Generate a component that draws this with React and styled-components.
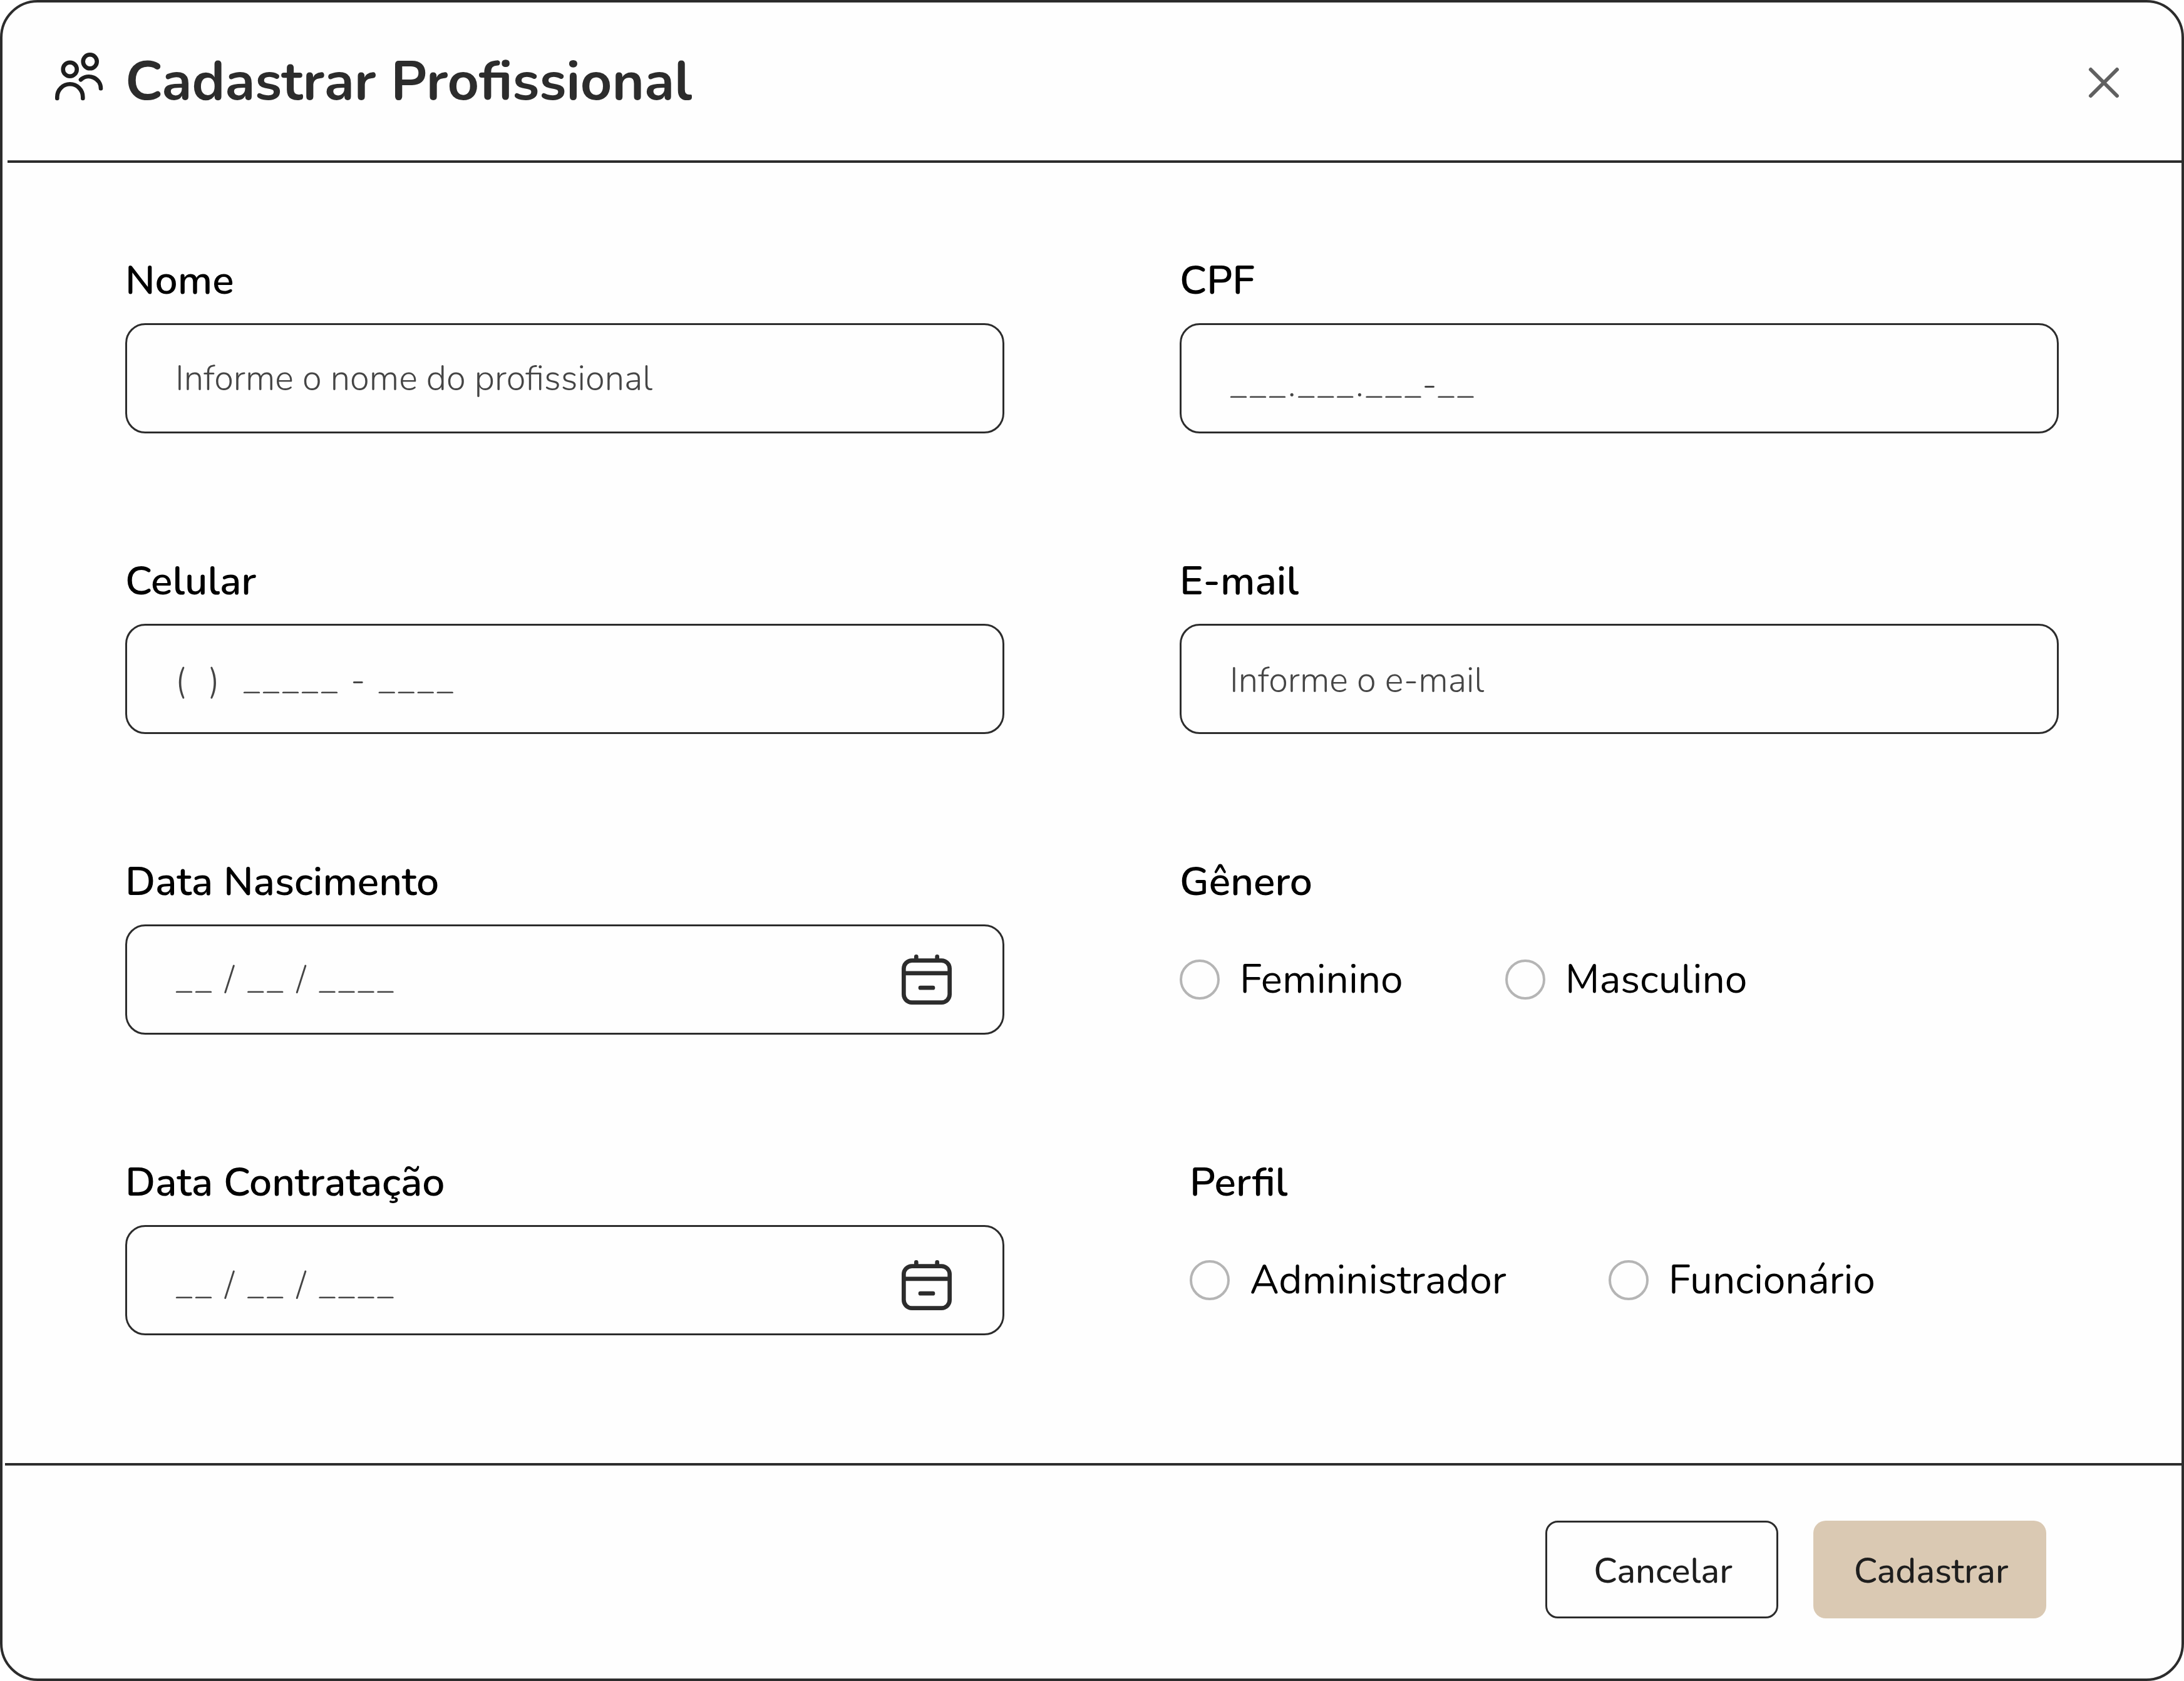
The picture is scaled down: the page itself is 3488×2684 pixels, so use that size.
import React from "react";
import styled, { createGlobalStyle } from "styled-components";

const ink = "#2c2c2c";

const GlobalStyle = createGlobalStyle`
  *, *::before, *::after { box-sizing: border-box; }
  body {
    margin: 0;
    background: #ffffff;
    font-family: Nunito, Lato, sans-serif;
  }
  input, button { font-family: inherit; }
`;

const Modal = styled.main`
  display: flex;
  flex-direction: column;
  min-height: 100vh;
  border: 4px solid ${ink};
  border-radius: 60px;
  background: #fefefe;
`;

const Header = styled.header`
  display: flex;
  align-items: center;
  gap: 20px;
  margin-left: 8px;
  padding: 66px 72px 66px 64px;
  border-bottom: 4px solid ${ink};
`;

const Title = styled.h1`
  flex: 1;
  margin: 0;
  color: ${ink};
  font-size: 88px;
  font-weight: 700;
  line-height: 120px;
`;

const HeaderIcon = styled.svg`
  width: 104px;
  height: 104px;
  fill: none;
  stroke: #1e1e1e;
  stroke-width: 6.6;
  stroke-linecap: round;
`;

const CloseButton = styled.button`
  display: flex;
  width: 104px;
  height: 104px;
  padding: 0;
  border: 0;
  background: none;
  color: #606060;
`;

const Form = styled.form`
  display: flex;
  flex: 1;
  flex-direction: column;
`;

const Fields = styled.div`
  display: grid;
  flex: 1;
  grid-template-columns: 1fr 1fr;
  align-content: start;
  gap: 192px 280px;
  padding: 144px 196px 204px;
`;

const Field = styled.div`
  display: flex;
  flex-direction: column;
  gap: 24px;
`;

const labelText = `
  color: #000000;
  font-size: 64px;
  font-weight: 600;
  line-height: 88px;
`;

const Label = styled.label`
  ${labelText}
`;

const InputBox = styled.div`
  display: flex;
  align-items: center;
  height: 176px;
  padding: ${(p) => p.$drop || 0}px 81px 0 77px;
  border: 3px solid ${ink};
  border-radius: 32px;
`;

const Input = styled.input`
  flex: 1;
  min-width: 0;
  height: 80px;
  padding: 0;
  border: 0;
  outline: 0;
  background: transparent;
  color: ${ink};
  font-size: 56px;
  font-weight: 300;
  letter-spacing: ${(p) => (p.$mask ? "3px" : "normal")};

  &::placeholder {
    color: #454545;
    opacity: 1;
  }
`;

const CalendarButton = styled.button`
  display: flex;
  width: 80px;
  height: 80px;
  padding: 0;
  border: 0;
  background: none;
  color: ${ink};
`;

const RadioGroup = styled.fieldset`
  min-width: 0;
  margin: 0;
  padding: 0 0 0 ${(p) => (p.$inset ? 16 : 0)}px;
  border: 0;
`;

const Legend = styled.legend`
  ${labelText}
  margin-bottom: 24px;
  padding: 0;
`;

const Options = styled.div`
  display: flex;
  align-items: center;
  gap: 163px;
  height: 176px;
`;

const Option = styled.label`
  display: flex;
  align-items: center;
  gap: 32px;
  color: #000000;
  font-size: 64px;
  line-height: 88px;
`;

const Radio = styled.input`
  appearance: none;
  width: 64px;
  height: 64px;
  margin: 0;
  border: 4px solid #b5b5b5;
  border-radius: 50%;

  &:checked {
    background: radial-gradient(${ink} 45%, transparent 48%);
  }
`;

const Footer = styled.footer`
  display: flex;
  justify-content: flex-end;
  gap: 56px;
  margin-left: 4px;
  padding: 88px 216px 96px;
  border-top: 4px solid ${ink};
`;

const Button = styled.button`
  min-width: 372px;
  height: 156px;
  padding: 4px 24px 0 28px;
  border: ${(p) => (p.$primary ? "0" : `3px solid ${ink}`)};
  border-radius: 20px;
  background: ${(p) => (p.$primary ? "#dac9b3" : "transparent")};
  color: #1e1e1e;
  font-size: 56px;
  font-weight: 500;
`;

function UsersIcon() {
  return (
    <HeaderIcon viewBox="0 0 104 104" aria-hidden="true">
      <circle cx="35.7" cy="32.7" r="11" />
      <circle cx="67.7" cy="20.3" r="11" />
      <path d="M15.3 79v-2.2a20.5 20.5 0 0 1 41 0V79" />
      <path d="M53 49.3A19.1 19.1 0 0 1 85 63.3" />
    </HeaderIcon>
  );
}

function CloseIcon() {
  return (
    <svg width="104" height="104" viewBox="0 0 104 104" aria-hidden="true">
      <path d="M31 33l42 42M73 33l-42 42" stroke="currentColor" strokeWidth="6" strokeLinecap="round" />
    </svg>
  );
}

function CalendarIcon() {
  return (
    <svg
      width="80"
      height="80"
      viewBox="0 0 80 80"
      fill="none"
      stroke="currentColor"
      strokeWidth="6.7"
      strokeLinecap="round"
      aria-hidden="true"
    >
      <rect x="3.35" y="9.6" width="73.3" height="67" rx="13" />
      <path d="M23.3 3.4v5M56.7 3.4v5M4 29.8h72M30 53.2h20" />
    </svg>
  );
}

function TextField({ id, label, type = "text", placeholder, mask, drop }) {
  return (
    <Field>
      <Label htmlFor={id}>{label}</Label>
      <InputBox $drop={drop}>
        <Input id={id} name={id} type={type} placeholder={placeholder} $mask={mask} />
      </InputBox>
    </Field>
  );
}

function DateField({ id, label, drop }) {
  return (
    <Field>
      <Label htmlFor={id}>{label}</Label>
      <InputBox $drop={drop}>
        <Input id={id} name={id} inputMode="numeric" placeholder="__ / __ / ____" $mask />
        <CalendarButton type="button" aria-label={`Abrir calendário: ${label}`}>
          <CalendarIcon />
        </CalendarButton>
      </InputBox>
    </Field>
  );
}

function RadioField({ name, label, options, inset }) {
  return (
    <RadioGroup $inset={inset}>
      <Legend>{label}</Legend>
      <Options>
        {options.map((option) => (
          <Option key={option}>
            <Radio type="radio" name={name} value={option} />
            {option}
          </Option>
        ))}
      </Options>
    </RadioGroup>
  );
}

export default function App() {
  return (
    <>
      <GlobalStyle />
      <Modal>
        <Header>
          <UsersIcon />
          <Title>Cadastrar Profissional</Title>
          <CloseButton type="button" aria-label="Fechar">
            <CloseIcon />
          </CloseButton>
        </Header>
        <Form onSubmit={(event) => event.preventDefault()}>
          <Fields>
            <TextField id="nome" label="Nome" placeholder="Informe o nome do profissional" />
            <TextField id="cpf" label="CPF" placeholder="___.___.___-__" mask drop={20} />
            <TextField id="celular" label="Celular" type="tel" placeholder="(  )  _____ - ____" mask drop={4} />
            <TextField id="email" label="E-mail" type="email" placeholder="Informe o e-mail" drop={4} />
            <DateField id="nascimento" label="Data Nascimento" />
            <RadioField name="genero" label="Gênero" options={["Feminino", "Masculino"]} />
            <DateField id="contratacao" label="Data Contratação" drop={16} />
            <RadioField name="perfil" label="Perfil" options={["Administrador", "Funcionário"]} inset />
          </Fields>
          <Footer>
            <Button type="button">Cancelar</Button>
            <Button type="submit" $primary>
              Cadastrar
            </Button>
          </Footer>
        </Form>
      </Modal>
    </>
  );
}
